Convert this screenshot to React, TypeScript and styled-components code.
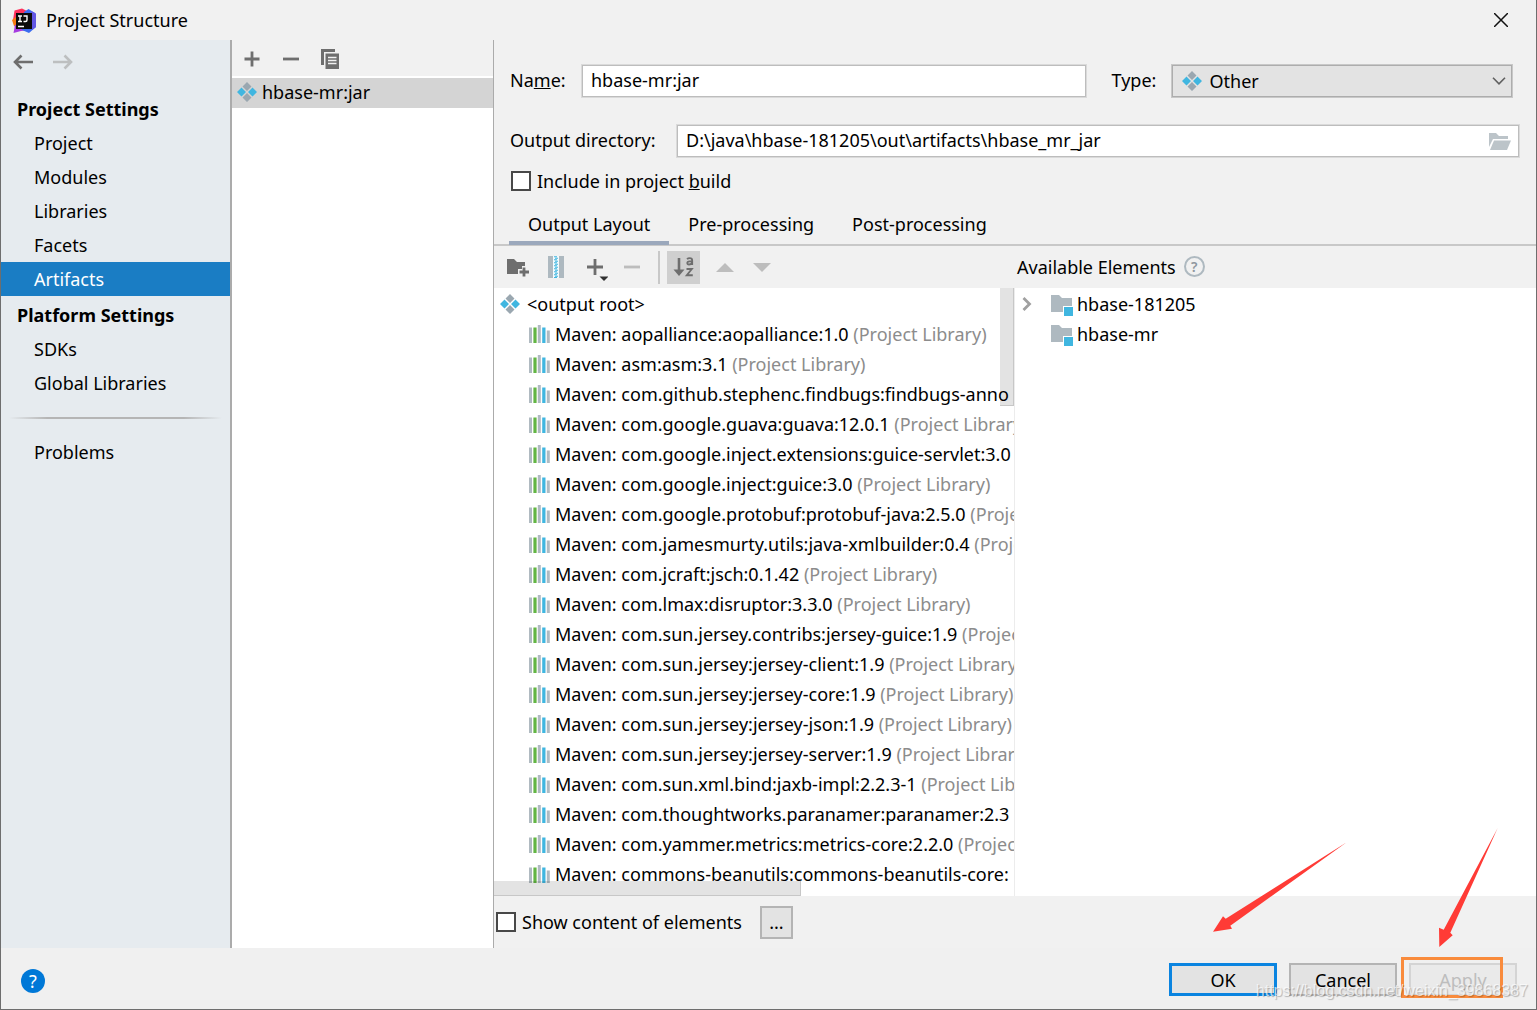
import React from "react";
import styled, { createGlobalStyle, css } from "styled-components";

const GlobalStyle = createGlobalStyle`
  *, *::before, *::after { box-sizing: border-box; }
  body {
    margin: 0;
    background: #f1f1f1;
    color: #000;
    font: 18px/24px "Noto Sans", "Open Sans", "Noto Sans CJK SC", sans-serif;
  }
  button, input, select { font: inherit; color: inherit; }
  svg { display: block; flex: none; }
`;

const Window = styled.div`
  position: relative;
  display: flex;
  flex-direction: column;
  height: 100vh;
  border: 1px solid #6e6e6e;
  border-top: 0;
  background: #f1f1f1;
  overflow: hidden;
`;

const TitleBar = styled.header`
  display: flex;
  align-items: center;
  flex: none;
  height: 40px;
  padding: 0 23px 0 11px;
  gap: 9px;
`;

const Title = styled.h1`
  flex: 1;
  margin: 0;
  font-size: 18px;
  font-weight: 400;
`;

const IconButton = styled.button<{ $active?: boolean; $wide?: boolean }>`
  display: inline-flex;
  align-items: center;
  justify-content: center;
  flex: none;
  width: ${(p) => (p.$wide ? 33 : 24)}px;
  height: ${(p) => (p.$wide ? 33 : 24)}px;
  padding: 0;
  border: 0;
  background: ${(p) => (p.$active ? "#cfcfcf" : "transparent")};
`;

const Body = styled.div`
  display: flex;
  flex: 1;
  min-height: 0;
`;

const Sidebar = styled.nav`
  flex: none;
  width: 231px;
  border-right: 2px solid #ababab;
  background: #e6ebef;
`;

const NavButtons = styled.div`
  display: flex;
  align-items: center;
  gap: 16px;
  height: 50px;
  padding: 0 0 6px 10px;
`;

const NavHeading = styled.h2`
  margin: 0;
  padding: 3px 0 1px 16px;
  font-size: 18px;
  line-height: 32px;
  font-weight: 700;
`;

const NavList = styled.ul`
  margin: 0;
  padding: 0;
  list-style: none;
`;

const NavLink = styled.a<{ $selected?: boolean }>`
  display: block;
  padding-left: 33px;
  line-height: 34px;
  text-decoration: none;
  color: ${(p) => (p.$selected ? "#fff" : "#000")};
  background: ${(p) => (p.$selected ? "#1a7dc4" : "transparent")};
`;

const Divider = styled.hr`
  height: 2px;
  margin: 17px 8px 16px;
  border: 0;
  background: linear-gradient(to right, transparent, #b5b5b5 18%, #b5b5b5 82%, transparent);
`;

const ListPanel = styled.section`
  flex: none;
  width: 262px;
  border-right: 1px solid #ababab;
  background: #fff;
`;

const ListTools = styled.div`
  display: flex;
  align-items: center;
  gap: 15px;
  height: 36px;
  margin-bottom: 2px;
  padding: 2px 0 0 8px;
  background: #f1f1f1;
`;

const ListRow = styled.div`
  display: flex;
  align-items: center;
  gap: 5px;
  height: 30px;
  padding: 0 0 2px 5px;
  background: #d4d4d4;
`;

const Main = styled.main`
  display: flex;
  flex-direction: column;
  flex: 1;
  min-width: 0;
`;

const Form = styled.form`
  display: grid;
  gap: 26px;
  padding: 24px 16px 0;
`;

const NameRow = styled.div`
  display: grid;
  grid-template-columns: 71px 31fr 84px 21fr;
  align-items: center;
  padding-right: 7px;
`;

const Label = styled.label<{ $inset?: boolean }>`
  padding: 0 0 2px ${(p) => (p.$inset ? 25 : 0)}px;
  white-space: nowrap;
`;

const DirectoryRow = styled.div`
  display: grid;
  grid-template-columns: 166px 1fr;
  align-items: center;
`;

const fieldBox = css`
  width: 100%;
  height: 34px;
  border: 1px solid #dadada;
  border-radius: 0;
  outline: 0;
  box-shadow: inset 0 0 0 1px #bdbdbd;
`;

const TextField = styled.input`
  ${fieldBox}
  padding: 0 32px 2px 9px;
  background: #fff;
`;

const Overlaid = styled.div`
  position: relative;
`;

const Overlay = styled.span<{ $side: "left" | "right"; $inset: number }>`
  position: absolute;
  top: 0;
  bottom: 0;
  ${(p) => p.$side}: ${(p) => p.$inset}px;
  display: flex;
  align-items: center;
  pointer-events: none;
`;

const Select = styled.select`
  ${fieldBox}
  border-color: #c8c8c8;
  padding: 0 32px 0 38px;
  appearance: none;
  background: #e3e3e3;
  box-shadow: inset 0 0 0 1px #adadad;
`;

const CheckRow = styled.label`
  display: flex;
  align-items: center;
  gap: 6px;
`;

const Check = styled.input`
  appearance: none;
  flex: none;
  width: 20px;
  height: 20px;
  margin: 0;
  border: 2px solid #484848;
  background: #fff;
`;

const BuildOption = styled.div`
  padding: 11px 17px 0;
`;

const Tabs = styled.div`
  display: flex;
  flex: none;
  height: 41px;
  margin-top: 12px;
  padding-left: 15px;
  border-bottom: 2px solid #c8c8c8;
`;

const Tab = styled.button<{ $selected?: boolean }>`
  height: 40px;
  padding: 1px 19px 0;
  border: 0;
  border-bottom: 4px solid ${(p) => (p.$selected ? "#9ba8bc" : "transparent")};
  background: transparent;
`;

const Panes = styled.div`
  display: grid;
  grid-template-columns: 1fr 1fr;
  flex: 1;
  min-height: 0;
`;

const Pane = styled.section`
  display: flex;
  flex-direction: column;
  min-width: 0;
  min-height: 0;
`;

const PaneBar = styled.div`
  display: flex;
  align-items: center;
  flex: none;
  gap: 14px;
  height: 42px;
  padding-left: 12px;
`;

const ElementsBar = styled(PaneBar)`
  gap: 8px;
  padding: 0 0 1px 2px;
`;

const SortGroup = styled.div`
  display: flex;
  align-items: center;
  gap: 13px;
  padding-left: 7px;
  border-left: 2px solid #c8c8c8;
`;

const Tree = styled.div<{ $ruled?: boolean }>`
  position: relative;
  flex: 1;
  min-height: 0;
  padding-top: 1px;
  border-right: ${(p) => (p.$ruled ? "1px solid #ececec" : "0")};
  background: #fff;
  overflow: hidden;
`;

const TreeRow = styled.div<{ $indent: number; $gap?: number }>`
  display: flex;
  align-items: center;
  gap: ${(p) => p.$gap ?? 5}px;
  height: 30px;
  padding-left: ${(p) => p.$indent}px;
  white-space: pre;
`;

const Muted = styled.span`
  color: #8c8c8c;
`;

const VerticalThumb = styled.div`
  position: absolute;
  top: 0;
  right: 0;
  width: 14px;
  height: 118px;
  border: solid rgba(0, 0, 0, 0.12);
  border-width: 0 1px 1px 0;
  background: rgba(0, 0, 0, 0.11);
`;

const HorizontalThumb = styled.div`
  position: absolute;
  bottom: 0;
  left: 0;
  width: 59%;
  height: 15px;
  border: solid rgba(0, 0, 0, 0.12);
  border-width: 0 1px 1px 0;
  background: rgba(0, 0, 0, 0.11);
`;

const PaneFooter = styled.div`
  display: flex;
  align-items: center;
  flex: none;
  gap: 18px;
  height: 52px;
  padding-left: 2px;
`;

const Button = styled.button<{ $primary?: boolean; $small?: boolean }>`
  width: ${(p) => (p.$small ? 33 : 108)}px;
  height: 33px;
  padding: 0;
  border: ${(p) => (p.$primary ? "3px solid #0a84e0" : "2px solid #b4b4b4")};
  background: #e3e3e3;

  &:disabled {
    border-color: #d4d4d4;
    background: #eaeaea;
    color: #bdbdbd;
  }
`;

const Footer = styled.footer`
  display: flex;
  align-items: center;
  flex: none;
  gap: 12px;
  height: 61px;
  padding: 2px 19px 0 20px;
  background: #f0f0f0;
`;

const HelpButton = styled.button`
  width: 24px;
  height: 24px;
  margin: 2px auto 0 0;
  padding: 0;
  border: 0;
  border-radius: 50%;
  background: #0078d7;
  color: #fff;
`;

const HelpMark = styled.button`
  width: 21px;
  height: 21px;
  padding: 0;
  border: 2px solid #aeb9c0;
  border-radius: 50%;
  background: transparent;
  color: #8e979e;
  font-size: 14px;
  line-height: 16px;
  font-weight: 600;
`;

const Annotations = styled.div`
  position: absolute;
  right: 0;
  bottom: 0;
  width: 396px;
  height: 189px;
  pointer-events: none;
`;

const Watermark = styled.span`
  position: absolute;
  right: 8px;
  bottom: 7px;
  color: rgba(255, 255, 255, 0.7);
  font: 16px/22px "Liberation Sans", Arial, sans-serif;
  text-shadow: 1px 1px 1px rgba(0, 0, 0, 0.25);
`;

const AppLogo = () => (
  <svg width="25" height="25" viewBox="0 0 25 25" aria-hidden="true">
    <path d="M2.500 2.500L10 .5l8 4-5 12-10 3L1 12z" fill="#fe315d" />
    <path d="M0 12l4-3 3 8-5 1z" fill="#f97a12" />
    <path d="M3 17l9-1 5 6-8 1-7.500 2z" fill="#a63be0" />
    <path d="M12 4l4.500-3L23 5l1 14-7 6-7-3z" fill="#3b6cf0" />
    <path d="M19 3l5 2.500V19l-4 3z" fill="#6257e4" />
    <rect x="4" y="5" width="16" height="16" fill="#0b0b0b" />
    <path d="M6 8h4M8 8v5.500M6 13.500h4M11.500 8h3.500v4q0 1.500-1.500 1.500h-2M6 18.500h6" fill="none" stroke="#fff" strokeWidth="1.400" />
  </svg>
);

const Artifact = () => (
  <svg width="20" height="20" viewBox="0 0 20 20" aria-hidden="true">
    <path d="M10 0l4.500 4.500L10 9 5.500 4.500zM10 11l4.500 4.500L10 20l-4.500-4.500z" fill="#9aa7b0" />
    <path d="M4.500 5.500L9 10l-4.500 4.500L0 10zM15.500 5.500L20 10l-4.500 4.500L11 10z" fill="#40b6e0" />
  </svg>
);

const Library = () => (
  <svg width="22" height="20" viewBox="0 0 22 20" aria-hidden="true">
    <path d="M0 3.500h3V19H0zM8.800 1h3v18h-3zM17.800 6.500h3V19h-3z" fill="#b0bac1" />
    <path d="M4.400 3.500h3.200V19H4.400z" fill="#62b543" />
    <path d="M13.200 3.500h3.300V19h-3.300z" fill="#40b6e0" />
  </svg>
);

const Module = () => (
  <svg width="24" height="24" viewBox="0 0 24 24" aria-hidden="true">
    <path d="M1 3h8l3 3h10v8h-9v6H1z" fill="#aeb9c0" />
    <path d="M14 15h9v9h-9z" fill="#40b6e0" />
  </svg>
);

const Arrow = ({ flip }: { flip?: boolean }) => (
  <svg width="20" height="16" viewBox="0 0 20 16" aria-hidden="true">
    <path
      d={flip ? "M0 8h18M11.500 1.500L18 8l-6.500 6.500" : "M20 8H2M8.500 1.500L2 8l6.500 6.500"}
      fill="none"
      stroke={flip ? "#bdbfc0" : "#6e6e6e"}
      strokeWidth="2.600"
    />
  </svg>
);

const Plus = () => (
  <svg width="16" height="16" viewBox="0 0 16 16" aria-hidden="true">
    <path d="M8 .5v15M.5 8h15" stroke="#6e6e6e" strokeWidth="2.800" />
  </svg>
);

const Minus = ({ pale }: { pale?: boolean }) => (
  <svg width="16" height="16" viewBox="0 0 16 16" aria-hidden="true">
    <path d="M0 8h16" stroke={pale ? "#bdbdbd" : "#6e6e6e"} strokeWidth="2.800" />
  </svg>
);

const Copy = () => (
  <svg width="18" height="20" viewBox="0 0 18 20" aria-hidden="true">
    <path d="M0 0h14v3H3v13H0z" fill="#6e6e6e" />
    <path d="M4.500 4.500H18V20H4.500z" fill="#6e6e6e" />
    <path d="M7 8.500h8.500M7 11.500h8.500M7 14.500h8.500" stroke="#f1f1f1" strokeWidth="1.300" />
  </svg>
);

const Close = () => (
  <svg width="14" height="14" viewBox="0 0 14 14" aria-hidden="true">
    <path d="M0 0l14 14M14 0L0 14" stroke="#111" strokeWidth="1.500" />
  </svg>
);

const OpenFolder = () => (
  <svg width="22" height="17" viewBox="0 0 22 17" aria-hidden="true">
    <path d="M0 0h7l3 3h9v3H4L0 14z" fill="#bcc4c9" />
    <path d="M5 7.500h17L18 17H1z" fill="#bcc4c9" />
  </svg>
);

const ChevronDown = () => (
  <svg width="14" height="8" viewBox="0 0 14 8" aria-hidden="true">
    <path d="M1 .8l6 6 6-6" fill="none" stroke="#606060" strokeWidth="1.600" />
  </svg>
);

const ChevronRight = () => (
  <svg width="10" height="14" viewBox="0 0 10 14" aria-hidden="true">
    <path d="M1.500 1l6 6-6 6" fill="none" stroke="#a0a0a0" strokeWidth="2.800" />
  </svg>
);

const NewFolder = () => (
  <svg width="22" height="20" viewBox="0 0 22 20" aria-hidden="true">
    <path d="M0 2h7l3 3h8v4h-3v3h-4v5H0z" fill="#6e6e6e" />
    <path d="M17 10.500v9M12.500 15H22" stroke="#6e6e6e" strokeWidth="2.800" />
  </svg>
);

const Archive = () => (
  <svg width="16" height="22" viewBox="0 0 16 22" aria-hidden="true">
    <path d="M0 0h5v22H0zM11 0h5v22h-5z" fill="#aeb9c0" />
    <path d="M5 0h6v22H5z" fill="#f4fafd" />
    <path
      d="M6 .7h3M7 2.200h3M6 3.700h3M7 5.200h3M6 6.700h3M7 8.200h3M6 9.700h3M7 11.200h3M6 12.700h3M7 14.200h3M6 15.700h3M7 17.200h3M6 18.700h3M7 20.200h3M6 21.500h3"
      stroke="#40b6e0"
      strokeWidth="1.100"
    />
  </svg>
);

const AddMenu = () => (
  <svg width="28" height="28" viewBox="0 0 28 28" aria-hidden="true">
    <path d="M15 6v16M7 14h16" stroke="#6e6e6e" strokeWidth="2.800" />
    <path d="M19.500 23.500h9L24 28z" fill="#303030" />
  </svg>
);

const SortMark = () => (
  <svg width="22" height="22" viewBox="0 0 22 22" aria-hidden="true">
    <path d="M6 2v13" stroke="#6e6e6e" strokeWidth="2.600" />
    <path d="M.5 13.500h11L6 20z" fill="#6e6e6e" />
    <path
      d="M14 3.200q1-1 2.700-1 2.500 0 2.500 2.200V9M19 5.300h-2.500q-2.200.2-2.200 1.700T16 8.500q2 0 3-1.800"
      fill="none"
      stroke="#6e6e6e"
      strokeWidth="1.800"
    />
    <path d="M13.500 13h5.300l-5 6.200h6" fill="none" stroke="#6e6e6e" strokeWidth="1.900" />
  </svg>
);

const Triangle = ({ down }: { down?: boolean }) => (
  <svg width="18" height="9" viewBox="0 0 18 9" aria-hidden="true">
    <path d={down ? "M0 0h18L9 9z" : "M0 9h18L9 0z"} fill="#bdbdbd" />
  </svg>
);

type LibraryEntry = { name: string; note?: string };

const note = "(Project Library)";

const projectItems = ["Project", "Modules", "Libraries", "Facets", "Artifacts"];
const platformItems = ["SDKs", "Global Libraries"];

const libraries: LibraryEntry[] = [
  { name: "aopalliance:aopalliance:1.0", note },
  { name: "asm:asm:3.1", note },
  { name: "com.github.stephenc.findbugs:findbugs-anno" },
  { name: "com.google.guava:guava:12.0.1", note },
  { name: "com.google.inject.extensions:guice-servlet:3.0" },
  { name: "com.google.inject:guice:3.0", note },
  { name: "com.google.protobuf:protobuf-java:2.5.0", note },
  { name: "com.jamesmurty.utils:java-xmlbuilder:0.4", note },
  { name: "com.jcraft:jsch:0.1.42", note },
  { name: "com.lmax:disruptor:3.3.0", note },
  { name: "com.sun.jersey.contribs:jersey-guice:1.9", note },
  { name: "com.sun.jersey:jersey-client:1.9", note },
  { name: "com.sun.jersey:jersey-core:1.9", note },
  { name: "com.sun.jersey:jersey-json:1.9", note },
  { name: "com.sun.jersey:jersey-server:1.9", note },
  { name: "com.sun.xml.bind:jaxb-impl:2.2.3-1", note },
  { name: "com.thoughtworks.paranamer:paranamer:2.3" },
  { name: "com.yammer.metrics:metrics-core:2.2.0", note },
  { name: "commons-beanutils:commons-beanutils-core:" },
];

const NavItems = ({ items }: { items: string[] }) => (
  <NavList>
    {items.map((item) => (
      <li key={item}>
        <NavLink href="#" $selected={item === "Artifacts"}>{item}</NavLink>
      </li>
    ))}
  </NavList>
);

export default function App() {
  return (
    <>
      <GlobalStyle />
      <Window>
        <TitleBar>
          <AppLogo />
          <Title>Project Structure</Title>
          <IconButton aria-label="Close"><Close /></IconButton>
        </TitleBar>

        <Body>
          <Sidebar>
            <NavButtons>
              <IconButton aria-label="Back"><Arrow /></IconButton>
              <IconButton aria-label="Forward"><Arrow flip /></IconButton>
            </NavButtons>
            <NavHeading>Project Settings</NavHeading>
            <NavItems items={projectItems} />
            <NavHeading>Platform Settings</NavHeading>
            <NavItems items={platformItems} />
            <Divider />
            <NavItems items={["Problems"]} />
          </Sidebar>

          <ListPanel>
            <ListTools>
              <IconButton aria-label="Add"><Plus /></IconButton>
              <IconButton aria-label="Remove"><Minus /></IconButton>
              <IconButton aria-label="Copy"><Copy /></IconButton>
            </ListTools>
            <ListRow><Artifact />hbase-mr:jar</ListRow>
          </ListPanel>

          <Main>
            <Form>
              <NameRow>
                <Label htmlFor="name">Na<u>m</u>e:</Label>
                <TextField id="name" defaultValue="hbase-mr:jar" />
                <Label htmlFor="type" $inset>Type:</Label>
                <Overlaid>
                  <Select id="type" defaultValue="Other"><option>Other</option></Select>
                  <Overlay $side="left" $inset={11}><Artifact /></Overlay>
                  <Overlay $side="right" $inset={7}><ChevronDown /></Overlay>
                </Overlaid>
              </NameRow>
              <DirectoryRow>
                <Label htmlFor="directory">Output directory:</Label>
                <Overlaid>
                  <TextField id="directory" defaultValue="D:\java\hbase-181205\out\artifacts\hbase_mr_jar" />
                  <Overlay $side="right" $inset={9}><OpenFolder /></Overlay>
                </Overlaid>
              </DirectoryRow>
            </Form>
            <BuildOption>
              <CheckRow><Check type="checkbox" /><span>Include in project <u>b</u>uild</span></CheckRow>
            </BuildOption>

            <Tabs role="tablist">
              <Tab role="tab" aria-selected="true" $selected>Output Layout</Tab>
              <Tab role="tab">Pre-processing</Tab>
              <Tab role="tab">Post-processing</Tab>
            </Tabs>

            <Panes>
              <Pane>
                <PaneBar>
                  <IconButton aria-label="New directory"><NewFolder /></IconButton>
                  <IconButton aria-label="New archive"><Archive /></IconButton>
                  <IconButton aria-label="Add copy of"><AddMenu /></IconButton>
                  <IconButton aria-label="Remove element"><Minus pale /></IconButton>
                  <SortGroup>
                    <IconButton aria-label="Sort by name" $wide $active><SortMark /></IconButton>
                    <IconButton aria-label="Move up"><Triangle /></IconButton>
                    <IconButton aria-label="Move down"><Triangle down /></IconButton>
                  </SortGroup>
                </PaneBar>
                <Tree $ruled>
                  <TreeRow $indent={6} $gap={7}><Artifact />&lt;output root&gt;</TreeRow>
                  {libraries.map((lib) => (
                    <TreeRow key={lib.name} $indent={35} $gap={4}>
                      <Library />
                      <span>Maven: {lib.name}{lib.note && <Muted> {lib.note}</Muted>}</span>
                    </TreeRow>
                  ))}
                  <VerticalThumb />
                  <HorizontalThumb />
                </Tree>
                <PaneFooter>
                  <CheckRow><Check type="checkbox" />Show content of elements</CheckRow>
                  <Button $small>...</Button>
                </PaneFooter>
              </Pane>

              <Pane>
                <ElementsBar>
                  Available Elements
                  <HelpMark aria-label="Help on available elements">?</HelpMark>
                </ElementsBar>
                <Tree>
                  <TreeRow $indent={7} $gap={18}>
                    <ChevronRight />
                    <TreeRow $indent={0} $gap={3}><Module />hbase-181205</TreeRow>
                  </TreeRow>
                  <TreeRow $indent={35} $gap={3}><Module />hbase-mr</TreeRow>
                </Tree>
                <PaneFooter />
              </Pane>
            </Panes>
          </Main>
        </Body>

        <Footer>
          <HelpButton aria-label="Help">?</HelpButton>
          <Button $primary>OK</Button>
          <Button>Cancel</Button>
          <Button disabled>Apply</Button>
        </Footer>

        <Annotations>
          <svg width="396" height="189" viewBox="0 0 396 189" aria-hidden="true">
            <path d="M73 111.700L83 96.300l2.700 2.400L206.700 22.300 90.300 105.700l1.700 3z" fill="#ff3b36" />
            <path d="M299.300 127l-.3-19.300 4.700 2L357.700 8l-47.400 104.700 2.400 2.600z" fill="#ff3b36" />
            <rect x="262.500" y="138.500" width="99" height="38" fill="none" stroke="#f98b3c" strokeWidth="3" />
          </svg>
          <Watermark>https://blog.csdn.net/weixin_39868387</Watermark>
        </Annotations>
      </Window>
    </>
  );
}
